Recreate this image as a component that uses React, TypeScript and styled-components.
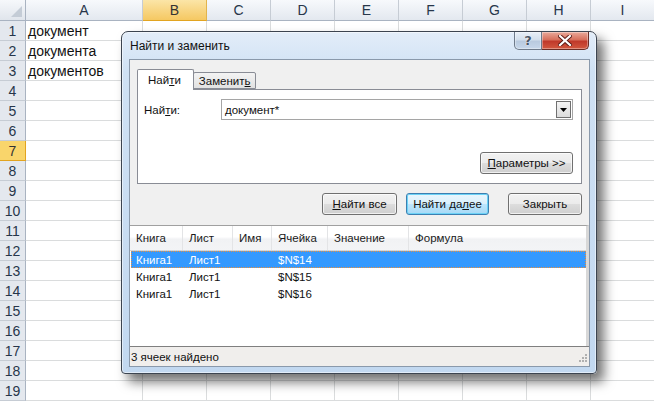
import React from 'react';
import styled, { createGlobalStyle } from 'styled-components';

const Global = createGlobalStyle`
  html, body {
    margin: 0;
    padding: 0;
    background: #ffffff;
    overflow: hidden;
  }
  body {
    font-family: "Liberation Sans", Arial, sans-serif;
  }
`;

const Page = styled.div`
  position: relative;
  width: 654px;
  height: 404px;
  overflow: hidden;
  background: #ffffff;
`;

const Sheet = styled.div`
  display: grid;
  grid-template-columns: 26px 117px repeat(8, 64px);
  grid-auto-rows: 20px;
  grid-template-rows: 21px;
  font-family: "Liberation Sans", Arial, sans-serif;
`;

const Corner = styled.div`
  background: linear-gradient(#f6f8fb, #e0e5ec);
  border-right: 1px solid #a9b3c1;
  border-bottom: 1px solid #a9b3c1;
  position: relative;
  &::after {
    content: '';
    position: absolute;
    right: 3px;
    bottom: 3px;
    border-left: 11px solid transparent;
    border-bottom: 11px solid #c4ccd6;
  }
`;

const ColHead = styled.div<{ $sel?: boolean }>`
  display: flex;
  align-items: center;
  justify-content: center;
  font-size: 14px;
  color: ${(p) => (p.$sel ? '#333' : '#27364a')};
  background: ${(p) =>
    p.$sel ? 'linear-gradient(#fbe5a7, #f5c862)' : 'linear-gradient(#f7f9fc, #e3e8ef)'};
  border-right: 1px solid ${(p) => (p.$sel ? '#e2b44c' : '#c6ccd4')};
  border-bottom: 1px solid ${(p) => (p.$sel ? '#e2a420' : '#a9b3c1')};
`;

const RowHead = styled.div<{ $sel?: boolean }>`
  display: flex;
  align-items: center;
  justify-content: center;
  font-size: 14px;
  color: ${(p) => (p.$sel ? '#333' : '#27364a')};
  background: ${(p) => (p.$sel ? '#f9d56b' : '#e4e8ee')};
  border-right: 1px solid ${(p) => (p.$sel ? '#e2a420' : '#a9b3c1')};
  border-bottom: 1px solid ${(p) => (p.$sel ? '#e2a420' : '#c6ccd4')};
`;

const Cell = styled.div`
  border-right: 1px solid #dadcdd;
  border-bottom: 1px solid #dadcdd;
  font-size: 14px;
  color: #111;
  padding: 1px 0 0 2px;
  white-space: nowrap;
  overflow: visible;
  line-height: 18px;
`;

const Dialog = styled.div`
  position: absolute;
  left: 121px;
  top: 31px;
  width: 476px;
  height: 343px;
  box-sizing: border-box;
  display: flex;
  flex-direction: column;
  border: 1px solid #3c4450;
  border-radius: 7px 7px 4px 4px;
  background: linear-gradient(to bottom, #e3edf9 0px, #cfe1f4 40px, #c2d8f0 100%);
  box-shadow: 0 0 0 1px rgba(255, 255, 255, 0.5) inset, 7px 8px 12px rgba(0, 0, 0, 0.55);
  font-family: "Liberation Sans", Tahoma, sans-serif;
`;

const TitleBar = styled.div`
  display: flex;
  align-items: flex-start;
  height: 27px;
  padding: 0 7px 0 8px;
`;

const Title = styled.div`
  font-size: 12px;
  color: #111;
  padding-top: 7px;
`;

const Caption = styled.div`
  margin-left: auto;
  display: flex;
`;

const CaptionBtn = styled.div<{ $close?: boolean }>`
  width: ${(p) => (p.$close ? '47px' : '28px')};
  height: 18px;
  box-sizing: border-box;
  display: flex;
  align-items: center;
  justify-content: center;
  border: 1px solid ${(p) => (p.$close ? '#6b2d25' : '#6e7a8a')};
  border-top: none;
  border-left: ${(p) => (p.$close ? 'none' : '1px solid #6e7a8a')};
  border-radius: ${(p) => (p.$close ? '0 0 5px 0' : '0 0 0 5px')};
  background: ${(p) =>
    p.$close
      ? 'linear-gradient(#e9a99a 0%, #d7705c 45%, #c0392a 55%, #d2583f 100%)'
      : 'linear-gradient(#e8eff7 0%, #d3dfec 45%, #b9cadf 55%, #c7d7ea 100%)'};
  box-shadow: inset 0 0 0 1px rgba(255, 255, 255, 0.35);
`;

const HelpGlyph = styled.span`
  font-family: "DejaVu Sans", sans-serif;
  font-size: 13px;
  font-weight: bold;
  color: #4a5564;
  text-shadow: 0 0 1px #fff, 0 0 1px #fff;
  line-height: 1;
`;

const Client = styled.div`
  flex: 1;
  margin: 0 6px 6px 7px;
  display: flex;
  flex-direction: column;
  background: #f0f0f0;
  border: 1px solid #8a99ab;
`;

const TabArea = styled.div`
  padding: 9px 7px 0 7px;
`;

const Tabs = styled.div`
  display: flex;
  align-items: flex-end;
  height: 20px;
  position: relative;
  z-index: 1;
`;

const Tab = styled.div<{ $active?: boolean }>`
  box-sizing: border-box;
  height: ${(p) => (p.$active ? '21px' : '17px')};
  margin-bottom: ${(p) => (p.$active ? '-1px' : '0')};
  padding: ${(p) => (p.$active ? '4px 12px 0 10px' : '2px 4px 0 5px')};
  font-size: 11.5px;
  color: #111;
  border: 1px solid #898c95;
  border-bottom: ${(p) => (p.$active ? 'none' : '1px solid #898c95')};
  margin-left: ${(p) => (p.$active ? '0' : '-1px')};
  border-radius: 2px 2px 0 0;
  background: ${(p) => (p.$active ? '#ffffff' : 'linear-gradient(#f3f3f3, #e2e2e2)')};
`;

const Panel = styled.div`
  height: 95px;
  box-sizing: border-box;
  background: #ffffff;
  border: 1px solid #898c95;
  padding: 9px 8px 0 6px;
  display: flex;
  flex-direction: column;
`;

const FindRow = styled.div`
  display: flex;
  align-items: center;
`;

const Label = styled.div`
  width: 77px;
  font-size: 11.5px;
  color: #111;
`;

const Combo = styled.div`
  flex: 1;
  height: 21px;
  box-sizing: border-box;
  border: 1px solid #a5a5a5;
  display: flex;
  align-items: center;
  padding: 1px 1px 1px 3px;
  font-size: 11.5px;
  color: #111;
`;

const ComboText = styled.span`
  flex: 1;
`;

const ComboArrow = styled.div`
  width: 15px;
  height: 17px;
  box-sizing: border-box;
  border: 1px solid #707070;
  background: linear-gradient(#f4f4f4, #dcdcdc);
  display: flex;
  align-items: center;
  justify-content: center;
`;

const ParamsRow = styled.div`
  margin-top: auto;
  margin-bottom: 9px;
  display: flex;
  justify-content: flex-end;
`;

const Button = styled.div<{ $w: number; $focus?: boolean }>`
  width: ${(p) => p.$w}px;
  height: 22px;
  box-sizing: border-box;
  border: 1px solid ${(p) => (p.$focus ? '#3c7fb1' : '#707070')};
  border-radius: 3px;
  display: flex;
  align-items: center;
  justify-content: center;
  font-size: 11.5px;
  color: #111;
  background: ${(p) =>
    p.$focus
      ? 'linear-gradient(#eaf6fd 0%, #d9f0fc 50%, #bee6fd 51%, #a7d9f5 100%)'
      : 'linear-gradient(#f2f2f2 0%, #ebebeb 50%, #dddddd 51%, #cfcfcf 100%)'};
  box-shadow: ${(p) =>
    p.$focus ? 'inset 0 0 0 1px #6cd2f6' : 'inset 0 0 0 1px rgba(255,255,255,0.7)'};
`;

const ButtonRow = styled.div`
  display: flex;
  justify-content: flex-end;
  padding: 9px 7px 0 0;
  gap: 9px;
`;

const CloseBtnWrap = styled.div`
  margin-left: 10px;
  display: flex;
`;

const List = styled.div`
  flex: 1;
  margin-top: 10px;
  background: #ffffff;
  border-top: 1px solid #a0a0a0;
  border-right: 3px solid #d8d8d8;
  display: flex;
  flex-direction: column;
`;

const ListHead = styled.div`
  display: grid;
  grid-template-columns: 53px 50px 39px 56px 81px 1fr;
  height: 24px;
  background: linear-gradient(#ffffff 0%, #ffffff 45%, #f1f2f4 55%, #f3f4f6 100%);
  border-bottom: 1px solid #d5d5d5;
`;

const HeadCell = styled.div`
  display: flex;
  align-items: center;
  padding-left: 6px;
  font-size: 11.5px;
  color: #1a1a1a;
  border-right: 1px solid #e3e4e6;
  &:last-child {
    border-right: none;
  }
`;

const Row = styled.div<{ $sel?: boolean }>`
  display: grid;
  grid-template-columns: 53px 50px 39px 56px 81px 1fr;
  height: 17px;
  margin: 0 0 0 1px;
  background: ${(p) => (p.$sel ? '#3399ff' : 'transparent')};
  color: ${(p) => (p.$sel ? '#ffffff' : '#111')};
  outline: ${(p) => (p.$sel ? '1px dotted #e89040' : 'none')};
  outline-offset: -1px;
`;

const RowCell = styled.div`
  display: flex;
  align-items: center;
  padding-left: 5px;
  font-size: 11.5px;
  white-space: nowrap;
`;

const Status = styled.div`
  height: 20px;
  box-sizing: border-box;
  border-top: 1px solid #7f7f7f;
  background: #f0eeec;
  display: flex;
  align-items: center;
  padding-left: 1px;
  font-size: 11.5px;
  color: #111;
  position: relative;
`;

const Grip = styled.svg`
  position: absolute;
  right: 2px;
  bottom: 2px;
`;

const U = styled.span`
  text-decoration: underline;
`;

const columns = ['A', 'B', 'C', 'D', 'E', 'F', 'G', 'H', 'I'];
const cellText: Record<number, string> = { 1: 'документ', 2: 'документа', 3: 'документов' };

const results = [
  { book: 'Книга1', sheet: 'Лист1', cell: '$N$14' },
  { book: 'Книга1', sheet: 'Лист1', cell: '$N$15' },
  { book: 'Книга1', sheet: 'Лист1', cell: '$N$16' },
];

const App: React.FC = () => {
  const rows = Array.from({ length: 19 }, (_, i) => i + 1);
  return (
    <Page>
      <Global />
      <Sheet>
        <Corner />
        {columns.map((c) => (
          <ColHead key={c} $sel={c === 'B'}>
            {c}
          </ColHead>
        ))}
        {rows.map((r) => (
          <React.Fragment key={r}>
            <RowHead $sel={r === 7}>{r}</RowHead>
            {columns.map((c) => (
              <Cell key={c}>{c === 'A' ? cellText[r] : ''}</Cell>
            ))}
          </React.Fragment>
        ))}
      </Sheet>

      <Dialog>
        <TitleBar>
          <Title>Найти и заменить</Title>
          <Caption>
            <CaptionBtn>
              <HelpGlyph>?</HelpGlyph>
            </CaptionBtn>
            <CaptionBtn $close>
              <svg width="14" height="11" viewBox="0 0 14 11">
                <path d="M2 1 L12 10 M12 1 L2 10" stroke="#5a1a14" strokeWidth="4" strokeLinecap="square" />
                <path d="M2 1 L12 10 M12 1 L2 10" stroke="#ffffff" strokeWidth="2.2" strokeLinecap="square" />
              </svg>
            </CaptionBtn>
          </Caption>
        </TitleBar>

        <Client>
          <TabArea>
            <Tabs>
              <Tab $active>
                Най<U>т</U>и
              </Tab>
              <Tab>
                Замени<span>т</span><U>ь</U>
              </Tab>
            </Tabs>
            <Panel>
              <FindRow>
                <Label>
                  Най<U>т</U>и:
                </Label>
                <Combo>
                  <ComboText>документ*</ComboText>
                  <ComboArrow>
                    <svg width="7" height="4" viewBox="0 0 7 4">
                      <path d="M0 0 H7 L3.5 4 Z" fill="#000" />
                    </svg>
                  </ComboArrow>
                </Combo>
              </FindRow>
              <ParamsRow>
                <Button $w={93}>
                  <U>П</U>араметры &gt;&gt;
                </Button>
              </ParamsRow>
            </Panel>
          </TabArea>

          <ButtonRow>
            <Button $w={75}>
              <U>Н</U>айти все
            </Button>
            <Button $w={83} $focus>
              Найти да<U>л</U>ее
            </Button>
            <CloseBtnWrap>
              <Button $w={74}>Закрыть</Button>
            </CloseBtnWrap>
          </ButtonRow>

          <List>
            <ListHead>
              <HeadCell>Книга</HeadCell>
              <HeadCell>Лист</HeadCell>
              <HeadCell>Имя</HeadCell>
              <HeadCell>Ячейка</HeadCell>
              <HeadCell>Значение</HeadCell>
              <HeadCell>Формула</HeadCell>
            </ListHead>
            {results.map((r, i) => (
              <Row key={r.cell} $sel={i === 0}>
                <RowCell>{r.book}</RowCell>
                <RowCell>{r.sheet}</RowCell>
                <RowCell />
                <RowCell>{r.cell}</RowCell>
                <RowCell />
                <RowCell />
              </Row>
            ))}
          </List>

          <Status>
            3 ячеек найдено
            <Grip width="10" height="10" viewBox="0 0 10 10">
              <rect x="8" y="0" width="2" height="2" fill="#b0b0b0" />
              <rect x="5" y="3" width="2" height="2" fill="#b0b0b0" />
              <rect x="8" y="3" width="2" height="2" fill="#b0b0b0" />
              <rect x="2" y="6" width="2" height="2" fill="#b0b0b0" />
              <rect x="5" y="6" width="2" height="2" fill="#b0b0b0" />
              <rect x="8" y="6" width="2" height="2" fill="#b0b0b0" />
            </Grip>
          </Status>
        </Client>
      </Dialog>
    </Page>
  );
};

export default App;
